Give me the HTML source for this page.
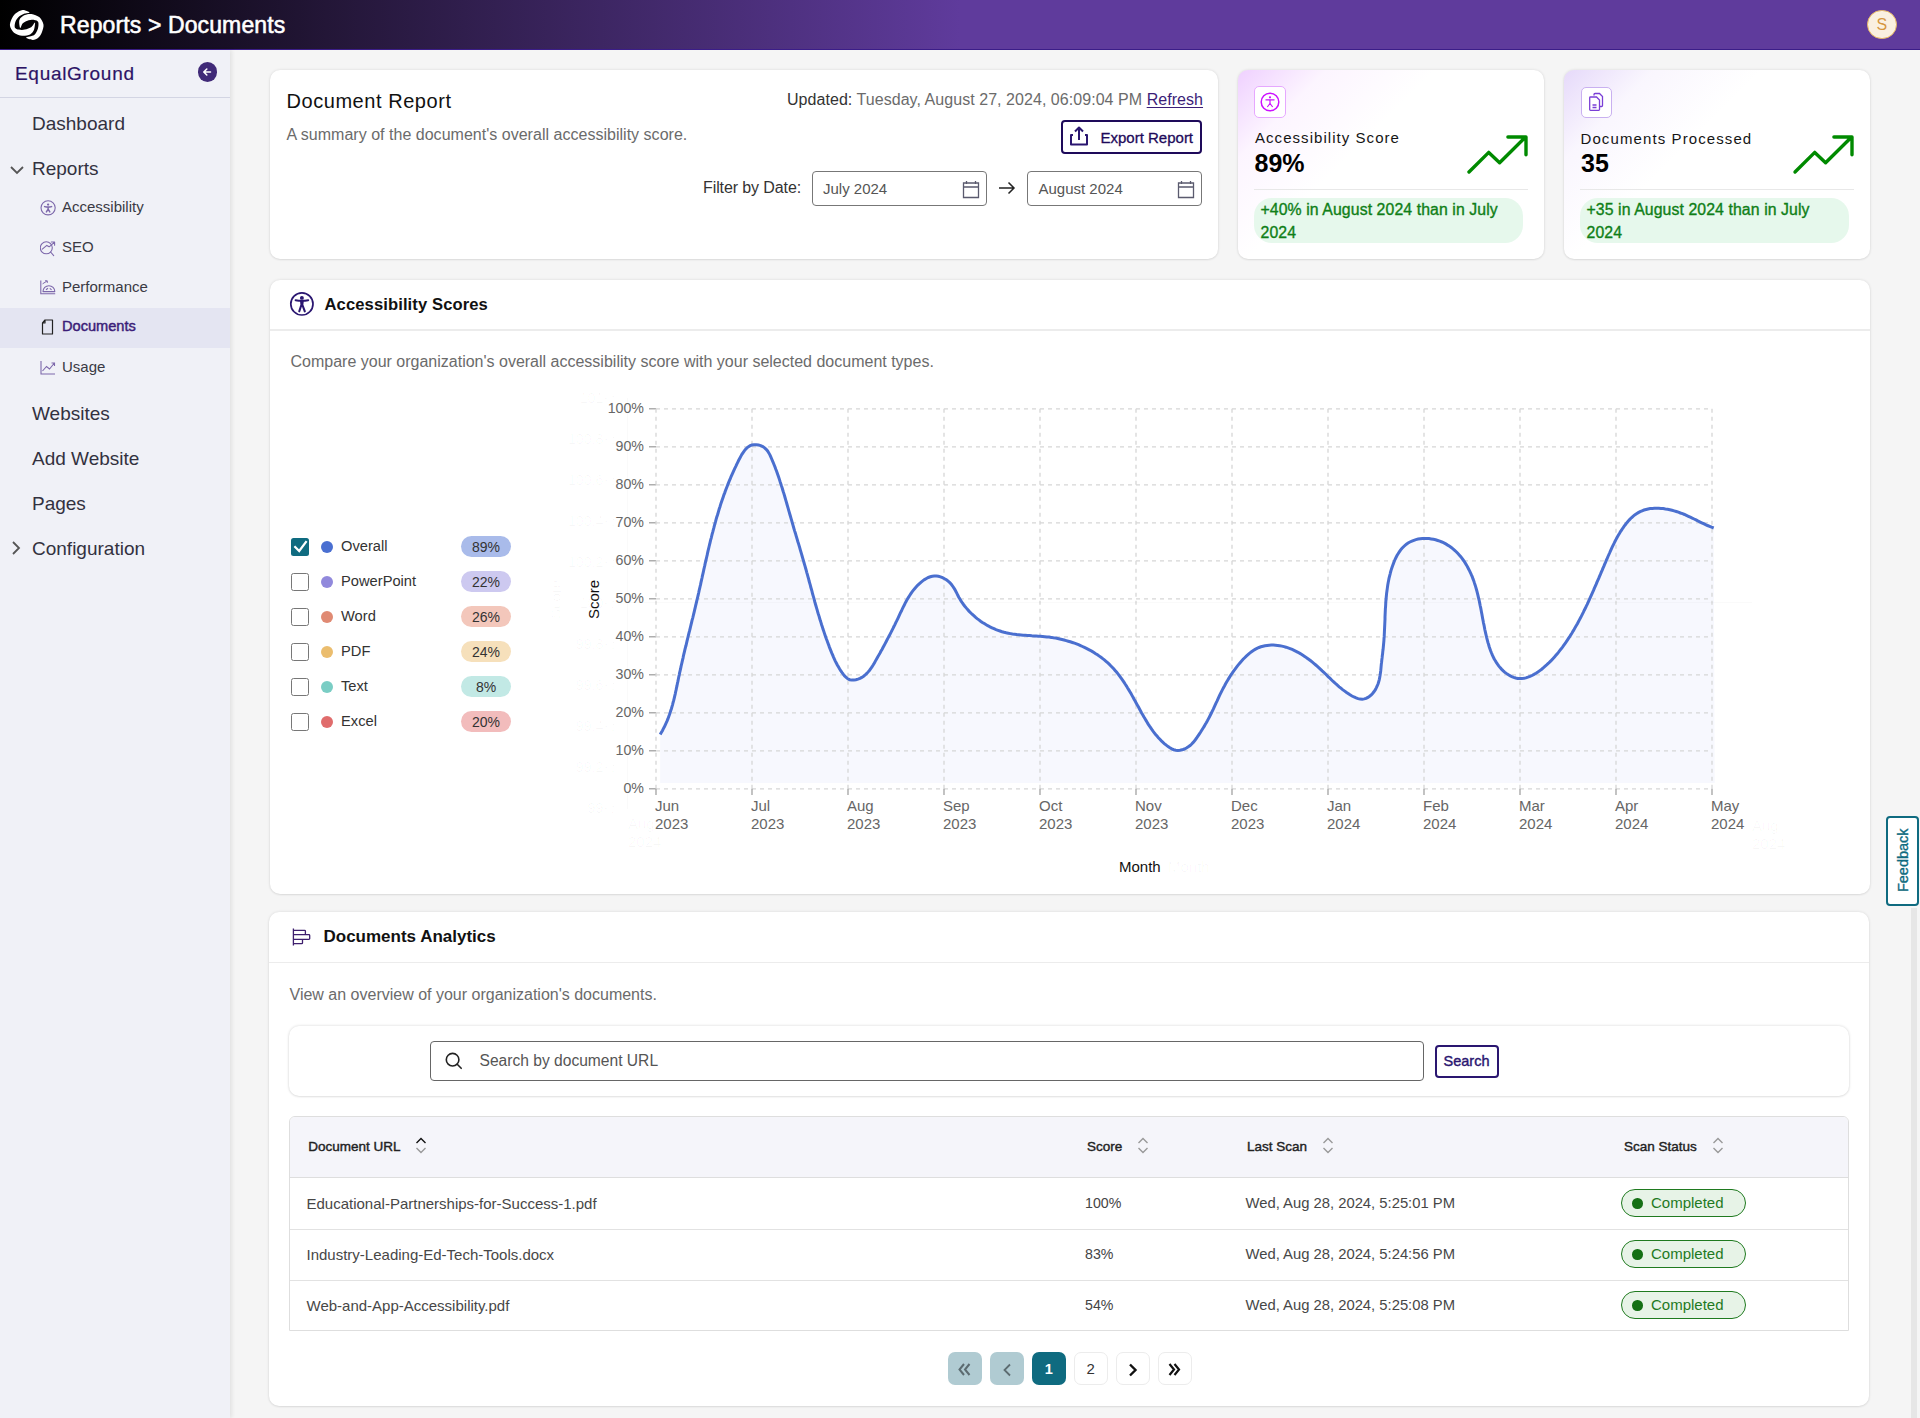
<!DOCTYPE html>
<html><head><meta charset="utf-8">
<style>
*{box-sizing:border-box;margin:0;padding:0}
html,body{width:1920px;height:1418px;overflow:hidden;background:#f5f5f5;font-family:"Liberation Sans",sans-serif;color:#222}
.abs{position:absolute}
.t{position:absolute;white-space:nowrap;line-height:1}
#hdr{position:absolute;left:0;top:0;width:1920px;height:50px;background:linear-gradient(90deg,#000 0%,#231637 17%,#5f3b9c 50%,#5f3b9c 100%);border-bottom:1px solid #3b1d88}
#side{position:absolute;left:0;top:50px;width:230px;height:1368px;background:#f0f1f7;box-shadow:2px 0 4px rgba(0,0,0,.08)}
.card{position:absolute;background:#fff;border-radius:10px;box-shadow:0 0 3px rgba(0,0,0,.12),0 1px 2px rgba(0,0,0,.06)}
.nav1{position:absolute;left:32px;font-size:19px;color:#33313f;white-space:nowrap;line-height:1}
.nav2{position:absolute;left:62px;font-size:15px;color:#3a3a44;white-space:nowrap;line-height:1}
.ico{position:absolute}
</style></head><body>
<!-- HEADER -->
<div id="hdr">
  <svg class="abs" style="left:6px;top:6px" width="44" height="38" viewBox="0 0 44 38"><path d="M23.60,6.40 C23.27,5.88 18.72,3.83 16.60,4.00 C14.49,4.17 11.18,6.09 9.50,7.50 C7.82,8.91 6.23,11.51 5.40,13.40 C4.58,15.29 3.61,18.09 4.00,20.10 C4.39,22.11 6.18,25.35 8.00,26.80 C9.82,28.25 13.69,29.56 16.10,29.80 C18.52,30.04 22.33,29.25 24.10,28.40 C25.87,27.54 27.16,25.87 27.90,24.10 C28.63,22.33 29.36,17.08 29.00,16.60 C28.64,16.12 27.03,19.85 25.50,20.90 C23.97,21.95 20.69,23.20 18.80,23.60 C16.91,24.01 14.40,23.93 12.90,23.60 C11.40,23.27 9.28,22.69 8.80,21.40 C8.32,20.11 9.01,16.68 9.70,15.00 C10.39,13.32 12.04,11.32 13.40,10.20 C14.77,9.07 17.27,8.07 18.80,7.50 C20.33,6.93 23.93,6.93 23.60,6.40Z" fill="#fff"/><path d="M20.10,31.60 C19.89,32.35 24.94,34.02 26.80,34.00 C28.66,33.98 31.14,32.67 32.50,31.50 C33.87,30.33 35.15,28.11 35.90,26.20 C36.65,24.29 37.86,21.04 37.50,18.80 C37.14,16.57 35.30,12.92 33.50,11.30 C31.70,9.68 27.70,8.33 25.50,8.00 C23.30,7.67 20.62,8.21 18.80,9.10 C16.98,9.98 14.09,11.96 13.40,13.90 C12.71,15.84 13.72,21.48 14.20,22.00 C14.68,22.52 15.52,18.49 16.60,17.40 C17.68,16.30 19.66,15.22 21.40,14.70 C23.14,14.17 26.58,13.71 28.20,13.90 C29.82,14.10 31.65,14.66 32.20,16.00 C32.76,17.34 32.50,20.85 31.90,22.80 C31.30,24.75 29.97,27.68 28.20,29.00 C26.43,30.32 20.31,30.85 20.10,31.60Z" fill="#fff"/></svg>
  <div class="t" style="left:60px;top:14px;font-size:23px;color:#fff;-webkit-text-stroke:0.55px #fff;letter-spacing:0.12px">Reports &gt; Documents</div>
  <div class="abs" style="left:1867px;top:9.8px;width:29.5px;height:29.5px;border-radius:50%;background:#faf0e0;border:1.2px solid #e8b860"></div>
  <div class="t" style="left:1867px;width:29.5px;text-align:center;top:16.5px;font-size:16px;color:#d6973e">S</div>
</div>
<!-- SIDEBAR -->
<div id="side">
  <div class="t" style="left:15px;top:13.6px;font-size:19px;color:#2d1466;letter-spacing:0.7px;-webkit-text-stroke:0.2px #2d1466">EqualGround</div>
  <div class="abs" style="left:197.7px;top:12.4px;width:19.6px;height:19.6px;border-radius:50%;background:#402a78"></div>
  <svg class="abs" style="left:201px;top:16px" width="12" height="12" viewBox="0 0 12 12"><path d="M9.5,6 H3 M5.8,3 L2.8,6 L5.8,9" stroke="#fff" stroke-width="1.6" fill="none" stroke-linecap="round" stroke-linejoin="round"/></svg>
  <div class="abs" style="left:0;top:46.5px;width:230px;height:1.2px;background:#d3d5e3"></div>
  <div class="nav1" style="top:63.5px">Dashboard</div>
  <svg class="abs" style="left:9px;top:114px" width="16" height="12" viewBox="0 0 16 12"><path d="M2,3 L8,9 L14,3" stroke="#555" stroke-width="1.8" fill="none"/></svg>
  <div class="nav1" style="top:108.5px">Reports</div>
  <svg class="abs" style="left:40px;top:150px" width="16" height="16" viewBox="0 0 16 16"><circle cx="8.1" cy="7.8" r="7.1" stroke="#7d68ab" stroke-width="1.1" fill="none"/><circle cx="8.1" cy="4.6" r="1.15" fill="#7d68ab"/><path d="M4.6,6.6 Q8.1,7.6 11.6,6.6 M8.1,6.9 V9.2 L6.4,11.9 M8.1,9.2 L9.8,11.9" stroke="#7d68ab" stroke-width="1.5" fill="none" stroke-linecap="round" stroke-linejoin="round"/></svg>
  <div class="nav2" style="top:148.5px">Accessibility</div>
  <svg class="abs" style="left:40px;top:189px" width="17" height="18" viewBox="0 0 17 18"><circle cx="6.3" cy="8.8" r="6" stroke="#7d68ab" stroke-width="1.1" fill="none"/><path d="M10.6,13 L13.7,16.6 M2.3,10.2 L6.8,6.4 L9.2,7.8 L14.3,3.4 M11.3,3 H14.6 V6.2" stroke="#7d68ab" stroke-width="1.1" fill="none" stroke-linecap="round" stroke-linejoin="round"/></svg>
  <div class="nav2" style="top:188.5px">SEO</div>
  <svg class="abs" style="left:40px;top:229px" width="16" height="16" viewBox="0 0 16 16"><path d="M0.8,1.6 V14.8 H15.2" stroke="#7d68ab" stroke-width="1.1" fill="none"/><path d="M3,12.6 A5.9,5.9 0 0 1 14.8,12.6 Z M6,10.8 L8,9.3 M11.6,10.8 L9.8,9.3" stroke="#7d68ab" stroke-width="1.1" fill="none" stroke-linejoin="round"/><path d="M2.6,4.8 L6.8,2.2 M5,1.8 H7.3 V3.9" stroke="#7d68ab" stroke-width="1" fill="none"/></svg>
  <div class="nav2" style="top:228.5px">Performance</div>
  <div class="abs" style="left:0;top:258px;width:230px;height:40px;background:#e4e5f2"></div>
  <svg class="abs" style="left:41px;top:269px" width="13" height="16" viewBox="0 0 13 16"><path d="M4,1 H11.5 V15 H1.5 V4 Z M4,1 V4 H1.5" stroke="#222" stroke-width="1.2" fill="none" stroke-linejoin="round"/></svg>
  <div class="nav2" style="top:269px;color:#3b1d78;-webkit-text-stroke:0.45px #3b1d78;font-size:14.6px">Documents</div>
  <svg class="abs" style="left:40px;top:309px" width="16" height="16" viewBox="0 0 16 16"><path d="M1,2 V15 H15 M2.5,12 L6.5,7.5 L9.5,10 L14,4.5 M11.5,4 H14.5 V7" stroke="#7d68ab" stroke-width="1.1" fill="none"/></svg>
  <div class="nav2" style="top:308.5px">Usage</div>
  <div class="nav1" style="top:353.5px">Websites</div>
  <div class="nav1" style="top:398.5px">Add Website</div>
  <div class="nav1" style="top:443.5px">Pages</div>
  <svg class="abs" style="left:10px;top:490px" width="12" height="16" viewBox="0 0 12 16"><path d="M3,2 L9,8 L3,14" stroke="#555" stroke-width="1.8" fill="none"/></svg>
  <div class="nav1" style="top:488.5px">Configuration</div>
</div>
<!-- CARD 1 -->
<div class="card" style="left:270px;top:70px;width:948px;height:189px">
  <div class="t" style="left:16.5px;top:20.9px;font-size:20px;color:#111;letter-spacing:0.55px">Document Report</div>
  <div class="t" style="left:16.5px;top:57px;font-size:16px;color:#6b6b6b;letter-spacing:0.02px">A summary of the document's overall accessibility score.</div>
  <div class="t" style="left:517px;top:21.5px;font-size:16px;color:#6b6b6b;letter-spacing:0.05px"><span style="color:#333">Updated:</span> Tuesday, August 27, 2024, 06:09:04 PM <span style="color:#3b1d78;text-decoration:underline;text-underline-offset:2px">Refresh</span></div>
  <div class="abs" style="left:791px;top:50px;width:141px;height:34px;border:2px solid #1e0a5a;border-radius:4px"></div>
  <svg class="abs" style="left:799px;top:55px" width="20" height="22" viewBox="0 0 20 22"><path d="M4,10 H2 V19.5 H18 V10 H16 M10,15 V2.5 M6,6.5 L10,2.5 L14,6.5" stroke="#2a1670" stroke-width="2" fill="none" stroke-linejoin="round"/></svg>
  <div class="t" style="left:830.5px;top:59.5px;font-size:15px;color:#1e0a5a;-webkit-text-stroke:0.3px #1e0a5a">Export Report</div>
  <div class="t" style="left:433px;top:109.5px;font-size:16px;color:#333;letter-spacing:-0.1px">Filter by Date:</div>
  <div class="abs" style="left:542px;top:101px;width:175px;height:35px;border:1.5px solid #777;border-radius:4px"></div>
  <div class="t" style="left:553px;top:111px;font-size:15px;color:#555">July 2024</div>
  <svg class="abs" style="left:692px;top:110px" width="18" height="19" viewBox="0 0 18 19"><path d="M1.5,3 H16.5 V17.5 H1.5 Z M1.5,7 H16.5 M4.5,1 V4 M13.5,1 V4" stroke="#5a5a6e" stroke-width="1.3" fill="none"/></svg>
  <svg class="abs" style="left:728px;top:111px" width="18" height="14" viewBox="0 0 18 14"><path d="M1,7 H16 M10.5,1.5 L16,7 L10.5,12.5" stroke="#222" stroke-width="1.5" fill="none"/></svg>
  <div class="abs" style="left:757px;top:101px;width:175px;height:35px;border:1.5px solid #777;border-radius:4px"></div>
  <div class="t" style="left:768.5px;top:111px;font-size:15px;color:#555">August 2024</div>
  <svg class="abs" style="left:907px;top:110px" width="18" height="19" viewBox="0 0 18 19"><path d="M1.5,3 H16.5 V17.5 H1.5 Z M1.5,7 H16.5 M4.5,1 V4 M13.5,1 V4" stroke="#5a5a6e" stroke-width="1.3" fill="none"/></svg>
</div>
<!-- CARD 2 -->
<div class="card" style="left:1238px;top:70px;width:306px;height:189px;overflow:hidden">
  <div class="abs" style="left:0;top:0;width:306px;height:189px;background:linear-gradient(135deg,rgba(226,170,255,.55) 0%,rgba(245,215,255,.25) 18%,rgba(255,255,255,0) 40%)"></div>
  <div class="abs" style="left:16px;top:16px;width:32px;height:32px;border:1.5px solid #e6a8ff;border-radius:5px;background:#fff"></div>
  <svg class="abs" style="left:22px;top:22px" width="20" height="20" viewBox="0 0 20 20"><circle cx="10" cy="10" r="8.8" stroke="#cc11ff" stroke-width="1.5" fill="none"/><circle cx="10" cy="5.3" r="1.1" fill="#cc11ff"/><path d="M5.5,7.8 H14.5 M10,7.8 V11.5 M10,11.5 L7.3,15 M10,11.5 L12.7,15" stroke="#cc11ff" stroke-width="1.2" fill="none"/></svg>
  <div class="t" style="left:17px;top:60px;font-size:15px;color:#151515;letter-spacing:1.05px">Accessibility Score</div>
  <div class="t" style="left:16.5px;top:151px;display:none"></div>
  <div class="t" style="left:16.5px;top:81px;font-size:25px;font-weight:bold;color:#000">89%</div>
  <svg class="abs" style="left:222px;top:58px" width="76" height="52" viewBox="1460 128 76 52"><path d="M1469,172 L1488.75,152.4 L1499.6,162.8 L1525.6,137 M1507.9,137 H1526 V154.7" stroke="#008a00" stroke-width="3.4" fill="none" stroke-linecap="round" stroke-linejoin="round"/></svg>
  <div class="abs" style="left:16px;top:118.5px;width:274px;height:1px;background:#e8e8e8"></div>
  <div class="abs" style="left:16px;top:128px;width:269px;height:44.5px;border-radius:18px;background:#e6f8ec"></div>
  <div class="t" style="left:22.5px;top:127.5px;font-size:15.8px;letter-spacing:0.1px;color:#0f7f17;-webkit-text-stroke:0.35px #0f7f17;line-height:23px">+40% in August 2024 than in July<br>2024</div>
</div>
<!-- CARD 3 -->
<div class="card" style="left:1564px;top:70px;width:306px;height:189px;overflow:hidden">
  <div class="abs" style="left:0;top:0;width:306px;height:189px;background:linear-gradient(135deg,rgba(205,180,245,.5) 0%,rgba(230,215,250,.22) 18%,rgba(255,255,255,0) 40%)"></div>
  <div class="abs" style="left:16.5px;top:16.5px;width:31.5px;height:31.5px;border:1.5px solid #c9b0f0;border-radius:5px;background:#fff"></div>
  <svg class="abs" style="left:22px;top:22px" width="20" height="20" viewBox="0 0 20 20"><path d="M8,3.5 V2.5 A1,1 0 0 1 9,1.5 H13.5 L16.5,4.5 V13.5 A1,1 0 0 1 15.5,14.5 H14" stroke="#7a3fd6" stroke-width="1.3" fill="none"/><path d="M4.5,5 H10.5 L13.5,8 V17.5 A0.8,0.8 0 0 1 12.7,18.3 H4.5 A0.8,0.8 0 0 1 3.7,17.5 V5.8 A0.8,0.8 0 0 1 4.5,5 Z M6.5,13 H10.5 M6.5,15.5 H10.5" stroke="#7a3fd6" stroke-width="1.3" fill="none"/></svg>
  <div class="t" style="left:16.5px;top:60.5px;font-size:15px;color:#151515;letter-spacing:1.1px">Documents Processed</div>
  <div class="t" style="left:17px;top:81px;font-size:25px;font-weight:bold;color:#000">35</div>
  <svg class="abs" style="left:222px;top:58px" width="76" height="52" viewBox="1460 128 76 52"><path d="M1469,172 L1488.75,152.4 L1499.6,162.8 L1525.6,137 M1507.9,137 H1526 V154.7" stroke="#008a00" stroke-width="3.4" fill="none" stroke-linecap="round" stroke-linejoin="round"/></svg>
  <div class="abs" style="left:16px;top:119px;width:274px;height:1px;background:#e8e8e8"></div>
  <div class="abs" style="left:16px;top:128px;width:269px;height:44.5px;border-radius:18px;background:#e6f8ec"></div>
  <div class="t" style="left:22.5px;top:127.5px;font-size:15.8px;letter-spacing:0.1px;color:#0f7f17;-webkit-text-stroke:0.35px #0f7f17;line-height:23px">+35 in August 2024 than in July<br>2024</div>
</div>
<!-- CARD 4 -->
<div class="card" style="left:270px;top:280px;width:1600px;height:614px">
  <svg class="abs" style="left:19px;top:11px" width="26" height="26" viewBox="0 0 26 26"><circle cx="12.9" cy="12.9" r="11.1" stroke="#2a1670" stroke-width="1.7" fill="none"/><circle cx="12.9" cy="6.9" r="1.95" fill="#2a1670"/><path d="M6.6,9.2 Q12.9,10.4 19.2,9.2" stroke="#2a1670" stroke-width="2" fill="none" stroke-linecap="round"/><path d="M11,9.7 L14.8,9.7 L14.2,15.4 L11.6,15.4 Z" fill="#2a1670"/><path d="M12,15 L10.3,20.3 M13.8,15 L15.8,20.3" stroke="#2a1670" stroke-width="2.1" fill="none" stroke-linecap="round"/></svg>
  <div class="t" style="left:54.5px;top:16.5px;font-size:16.6px;font-weight:bold;color:#111;letter-spacing:0.1px">Accessibility Scores</div>
  <div class="abs" style="left:0;top:49px;width:1600px;height:1.5px;background:#ececec"></div>
  <div class="t" style="left:20.5px;top:74px;font-size:16px;color:#6b6b6b">Compare your organization's overall accessibility score with your selected document types.</div>
</div>
<svg class="abs" style="left:0;top:0" width="1920" height="1418" viewBox="0 0 1920 1418">
<path d="M660.2,734.5 L661.3,732.6 L662.4,730.7 L663.4,728.7 L664.4,726.8 L665.3,724.8 L666.2,722.9 L667.1,720.9 L667.9,718.9 L668.6,716.9 L669.4,714.8 L670.1,712.8 L670.7,710.7 L671.4,708.7 L672.0,706.6 L672.6,704.6 L673.1,702.5 L673.7,700.4 L674.2,698.3 L674.7,696.2 L675.2,694.1 L675.6,692.0 L676.1,689.9 L676.5,687.8 L677.0,685.7 L677.4,683.5 L677.9,681.4 L678.3,679.3 L678.7,677.2 L679.2,675.1 L679.6,672.9 L680.1,670.8 L680.6,668.7 L681.0,666.6 L681.5,664.5 L682.0,662.4 L682.5,660.2 L683.0,658.1 L683.4,656.0 L683.9,653.9 L684.4,651.8 L684.9,649.7 L685.4,647.6 L686.0,645.5 L686.5,643.4 L687.0,641.2 L687.5,639.1 L688.0,637.0 L688.5,634.9 L689.0,632.8 L689.6,630.7 L690.1,628.6 L690.6,626.5 L691.1,624.4 L691.6,622.3 L692.1,620.2 L692.7,618.1 L693.2,616.0 L693.7,613.9 L694.2,611.8 L694.7,609.7 L695.2,607.6 L695.7,605.4 L696.2,603.3 L696.7,601.2 L697.2,599.1 L697.7,597.0 L698.2,594.9 L698.7,592.8 L699.1,590.7 L699.6,588.6 L700.1,586.5 L700.6,584.4 L701.0,582.3 L701.5,580.2 L702.0,578.0 L702.4,575.9 L702.9,573.8 L703.4,571.7 L703.8,569.6 L704.3,567.5 L704.8,565.4 L705.2,563.3 L705.7,561.2 L706.2,559.1 L706.7,557.0 L707.2,554.9 L707.6,552.8 L708.1,550.7 L708.6,548.6 L709.1,546.5 L709.6,544.4 L710.1,542.3 L710.6,540.2 L711.2,538.1 L711.7,536.0 L712.2,533.9 L712.8,531.9 L713.3,529.8 L713.9,527.7 L714.4,525.6 L715.0,523.5 L715.6,521.4 L716.1,519.4 L716.7,517.3 L717.4,515.2 L718.0,513.2 L718.6,511.1 L719.2,509.0 L719.9,507.0 L720.5,504.9 L721.2,502.8 L721.9,500.8 L722.6,498.7 L723.3,496.7 L724.0,494.6 L724.8,492.6 L725.5,490.6 L726.3,488.5 L727.1,486.5 L727.9,484.4 L728.7,482.4 L729.5,480.4 L730.4,478.4 L731.2,476.3 L732.1,474.3 L733.0,472.3 L733.9,470.3 L734.8,468.3 L735.8,466.3 L736.7,464.3 L737.7,462.3 L738.7,460.3 L739.8,458.3 L740.8,456.4 L741.9,454.4 L743.1,452.6 L744.3,450.9 L745.6,449.3 L747.0,447.9 L748.5,446.7 L750.2,445.7 L752.0,445.0 L754.0,444.7 L756.2,444.7 L758.5,445.0 L760.7,445.6 L762.8,446.5 L764.6,447.8 L766.2,449.3 L767.6,451.0 L768.8,452.9 L769.9,454.9 L770.8,456.9 L771.7,459.0 L772.6,461.1 L773.5,463.2 L774.3,465.2 L775.1,467.3 L775.8,469.3 L776.6,471.3 L777.3,473.3 L778.0,475.3 L778.7,477.3 L779.4,479.4 L780.0,481.4 L780.7,483.4 L781.3,485.4 L782.0,487.4 L782.6,489.5 L783.2,491.5 L783.9,493.6 L784.5,495.7 L785.1,497.7 L785.7,499.8 L786.3,501.9 L786.9,504.0 L787.5,506.1 L788.1,508.2 L788.7,510.3 L789.3,512.4 L789.9,514.5 L790.5,516.5 L791.1,518.6 L791.7,520.7 L792.3,522.8 L792.9,524.9 L793.5,527.0 L794.1,529.1 L794.7,531.1 L795.4,533.2 L796.0,535.3 L796.6,537.4 L797.2,539.4 L797.8,541.5 L798.5,543.6 L799.1,545.6 L799.7,547.7 L800.3,549.8 L800.9,551.9 L801.5,553.9 L802.1,556.0 L802.7,558.1 L803.3,560.2 L803.9,562.2 L804.5,564.3 L805.1,566.4 L805.7,568.5 L806.3,570.6 L806.8,572.6 L807.4,574.7 L808.0,576.8 L808.6,578.9 L809.1,581.0 L809.7,583.1 L810.3,585.2 L810.8,587.3 L811.4,589.3 L812.0,591.4 L812.5,593.5 L813.1,595.6 L813.7,597.7 L814.3,599.8 L814.8,601.9 L815.4,604.0 L816.0,606.0 L816.6,608.1 L817.2,610.2 L817.8,612.3 L818.4,614.3 L819.1,616.4 L819.7,618.5 L820.3,620.6 L821.0,622.6 L821.6,624.7 L822.3,626.7 L822.9,628.8 L823.6,630.8 L824.3,632.9 L825.0,634.9 L825.7,637.0 L826.4,639.0 L827.2,641.0 L827.9,643.1 L828.7,645.1 L829.4,647.1 L830.2,649.1 L831.0,651.1 L831.8,653.1 L832.7,655.1 L833.5,657.1 L834.4,659.1 L835.3,661.1 L836.3,663.0 L837.3,664.9 L838.4,666.8 L839.5,668.7 L840.7,670.6 L841.9,672.4 L843.2,674.2 L844.6,675.9 L846.2,677.5 L847.8,678.8 L849.7,679.7 L851.7,680.1 L853.8,680.1 L855.9,679.8 L858.0,679.2 L860.0,678.4 L861.8,677.4 L863.6,676.2 L865.2,674.9 L866.8,673.5 L868.2,671.9 L869.6,670.2 L870.9,668.5 L872.1,666.7 L873.3,664.8 L874.4,662.9 L875.5,660.9 L876.6,659.0 L877.7,657.1 L878.8,655.1 L879.9,653.2 L880.9,651.3 L882.0,649.4 L883.0,647.5 L884.1,645.6 L885.1,643.6 L886.1,641.7 L887.1,639.8 L888.1,637.9 L889.1,636.0 L890.1,634.1 L891.1,632.2 L892.0,630.3 L893.0,628.4 L893.9,626.5 L894.9,624.6 L895.8,622.6 L896.8,620.7 L897.7,618.8 L898.6,616.8 L899.5,614.9 L900.4,612.9 L901.4,611.0 L902.3,609.0 L903.2,607.1 L904.2,605.2 L905.2,603.2 L906.2,601.3 L907.2,599.4 L908.3,597.6 L909.5,595.7 L910.7,593.9 L911.9,592.1 L913.2,590.4 L914.6,588.7 L916.1,587.0 L917.6,585.3 L919.2,583.8 L920.9,582.3 L922.7,580.9 L924.5,579.6 L926.4,578.5 L928.3,577.5 L930.3,576.8 L932.3,576.2 L934.3,576.0 L936.4,576.0 L938.4,576.3 L940.5,576.9 L942.5,577.7 L944.5,578.7 L946.4,579.8 L948.1,581.2 L949.8,582.7 L951.3,584.3 L952.6,586.0 L953.8,587.8 L954.9,589.6 L955.9,591.5 L956.9,593.4 L957.8,595.3 L958.8,597.2 L959.9,599.1 L961.0,600.9 L962.2,602.7 L963.5,604.5 L964.8,606.2 L966.2,607.9 L967.6,609.5 L969.0,611.1 L970.6,612.7 L972.1,614.2 L973.8,615.7 L975.4,617.2 L977.1,618.6 L978.9,619.9 L980.6,621.2 L982.4,622.4 L984.3,623.6 L986.2,624.8 L988.1,625.8 L990.0,626.9 L992.0,627.8 L994.0,628.7 L996.0,629.6 L998.0,630.3 L1000.0,631.0 L1002.1,631.7 L1004.1,632.3 L1006.2,632.8 L1008.3,633.2 L1010.4,633.6 L1012.5,634.0 L1014.6,634.3 L1016.7,634.6 L1018.9,634.8 L1021.0,635.0 L1023.2,635.2 L1025.3,635.3 L1027.5,635.5 L1029.6,635.6 L1031.8,635.8 L1034.0,635.9 L1036.1,636.0 L1038.3,636.2 L1040.4,636.3 L1042.6,636.5 L1044.8,636.7 L1046.9,636.9 L1049.1,637.1 L1051.3,637.4 L1053.4,637.8 L1055.6,638.1 L1057.7,638.5 L1059.8,639.0 L1062.0,639.5 L1064.1,640.0 L1066.2,640.6 L1068.3,641.2 L1070.3,641.8 L1072.4,642.5 L1074.5,643.2 L1076.5,643.9 L1078.5,644.7 L1080.5,645.6 L1082.5,646.5 L1084.4,647.4 L1086.4,648.3 L1088.3,649.3 L1090.2,650.3 L1092.1,651.4 L1093.9,652.5 L1095.7,653.7 L1097.5,654.8 L1099.3,656.1 L1101.0,657.3 L1102.7,658.6 L1104.4,659.9 L1106.0,661.3 L1107.6,662.7 L1109.2,664.2 L1110.7,665.7 L1112.2,667.2 L1113.7,668.8 L1115.1,670.4 L1116.5,672.0 L1117.8,673.7 L1119.1,675.4 L1120.4,677.1 L1121.7,678.9 L1122.9,680.6 L1124.1,682.4 L1125.3,684.3 L1126.5,686.1 L1127.6,688.0 L1128.8,689.9 L1129.9,691.7 L1131.0,693.6 L1132.1,695.6 L1133.2,697.5 L1134.2,699.4 L1135.3,701.3 L1136.3,703.3 L1137.4,705.2 L1138.5,707.1 L1139.5,709.0 L1140.6,711.0 L1141.6,712.9 L1142.7,714.8 L1143.8,716.7 L1144.9,718.5 L1146.0,720.4 L1147.1,722.2 L1148.2,724.1 L1149.4,725.9 L1150.6,727.6 L1151.8,729.4 L1153.0,731.1 L1154.3,732.8 L1155.6,734.5 L1157.0,736.1 L1158.4,737.7 L1159.9,739.3 L1161.4,740.9 L1163.0,742.4 L1164.6,743.8 L1166.3,745.2 L1168.1,746.6 L1169.9,747.8 L1171.8,748.9 L1173.7,749.7 L1175.8,750.2 L1177.9,750.4 L1180.0,750.3 L1182.2,749.8 L1184.4,749.0 L1186.4,748.0 L1188.3,746.8 L1190.1,745.5 L1191.7,744.0 L1193.2,742.4 L1194.6,740.7 L1195.9,739.0 L1197.2,737.2 L1198.4,735.4 L1199.6,733.6 L1200.8,731.8 L1201.9,730.0 L1203.0,728.2 L1204.2,726.4 L1205.2,724.5 L1206.3,722.7 L1207.4,720.8 L1208.4,718.9 L1209.4,717.0 L1210.4,715.0 L1211.4,713.0 L1212.3,711.1 L1213.3,709.1 L1214.2,707.1 L1215.1,705.1 L1216.0,703.1 L1217.0,701.1 L1217.9,699.1 L1218.8,697.1 L1219.7,695.2 L1220.7,693.2 L1221.6,691.3 L1222.6,689.4 L1223.6,687.5 L1224.6,685.7 L1225.6,683.8 L1226.6,682.0 L1227.7,680.2 L1228.8,678.4 L1229.9,676.6 L1231.0,674.8 L1232.2,673.1 L1233.4,671.3 L1234.7,669.6 L1236.0,667.8 L1237.3,666.1 L1238.7,664.4 L1240.1,662.7 L1241.6,661.0 L1243.1,659.3 L1244.7,657.7 L1246.3,656.1 L1248.0,654.6 L1249.7,653.1 L1251.5,651.8 L1253.3,650.5 L1255.1,649.4 L1257.0,648.4 L1259.0,647.5 L1260.9,646.8 L1263.0,646.2 L1265.0,645.7 L1267.1,645.4 L1269.2,645.2 L1271.3,645.1 L1273.4,645.1 L1275.5,645.2 L1277.6,645.4 L1279.7,645.7 L1281.9,646.1 L1284.0,646.6 L1286.0,647.2 L1288.1,647.9 L1290.1,648.6 L1292.2,649.4 L1294.1,650.3 L1296.1,651.3 L1298.0,652.3 L1299.9,653.4 L1301.8,654.5 L1303.6,655.7 L1305.4,656.9 L1307.2,658.2 L1309.0,659.5 L1310.7,660.8 L1312.4,662.2 L1314.1,663.6 L1315.8,665.0 L1317.4,666.4 L1319.0,667.9 L1320.6,669.4 L1322.2,670.9 L1323.8,672.3 L1325.3,673.8 L1326.8,675.3 L1328.3,676.8 L1329.9,678.2 L1331.4,679.7 L1332.9,681.2 L1334.5,682.6 L1336.0,684.0 L1337.6,685.4 L1339.2,686.8 L1340.9,688.2 L1342.6,689.6 L1344.4,690.9 L1346.2,692.2 L1348.1,693.5 L1350.0,694.8 L1352.0,696.0 L1354.0,697.0 L1356.1,697.9 L1358.1,698.6 L1360.2,699.1 L1362.2,699.2 L1364.2,698.9 L1366.1,698.4 L1367.9,697.4 L1369.6,696.2 L1371.3,694.8 L1372.8,693.2 L1374.1,691.5 L1375.4,689.6 L1376.4,687.7 L1377.3,685.7 L1378.1,683.7 L1378.7,681.7 L1379.3,679.6 L1379.7,677.5 L1380.1,675.3 L1380.4,673.1 L1380.7,671.0 L1380.9,668.8 L1381.1,666.6 L1381.3,664.4 L1381.6,662.2 L1381.8,660.0 L1382.1,657.9 L1382.3,655.7 L1382.6,653.6 L1382.8,651.4 L1383.1,649.3 L1383.3,647.1 L1383.5,645.0 L1383.7,642.9 L1383.9,640.7 L1384.0,638.6 L1384.2,636.4 L1384.3,634.3 L1384.4,632.1 L1384.5,629.9 L1384.6,627.8 L1384.7,625.6 L1384.8,623.5 L1384.9,621.3 L1385.0,619.2 L1385.0,617.0 L1385.1,614.9 L1385.2,612.7 L1385.3,610.5 L1385.4,608.4 L1385.6,606.2 L1385.7,604.1 L1385.8,601.9 L1386.0,599.8 L1386.2,597.6 L1386.4,595.5 L1386.6,593.3 L1386.9,591.2 L1387.2,589.1 L1387.5,586.9 L1387.8,584.8 L1388.2,582.6 L1388.6,580.5 L1389.0,578.4 L1389.5,576.3 L1390.1,574.1 L1390.6,572.0 L1391.2,569.9 L1391.9,567.8 L1392.6,565.7 L1393.4,563.6 L1394.2,561.5 L1395.0,559.5 L1396.0,557.5 L1397.0,555.5 L1398.1,553.7 L1399.3,551.9 L1400.5,550.1 L1401.8,548.5 L1403.3,547.0 L1404.8,545.5 L1406.4,544.2 L1408.1,543.0 L1409.9,542.0 L1411.9,541.1 L1413.9,540.3 L1415.9,539.6 L1418.1,539.1 L1420.2,538.8 L1422.4,538.5 L1424.6,538.4 L1426.8,538.5 L1429.0,538.6 L1431.2,538.9 L1433.4,539.3 L1435.6,539.8 L1437.7,540.5 L1439.8,541.2 L1441.9,542.0 L1443.9,542.9 L1445.8,543.9 L1447.7,545.1 L1449.6,546.2 L1451.3,547.5 L1453.0,548.8 L1454.7,550.3 L1456.2,551.7 L1457.7,553.3 L1459.2,554.9 L1460.6,556.5 L1461.9,558.2 L1463.2,560.0 L1464.4,561.7 L1465.6,563.6 L1466.7,565.4 L1467.7,567.3 L1468.7,569.2 L1469.7,571.1 L1470.6,573.0 L1471.4,574.9 L1472.3,576.9 L1473.0,578.9 L1473.8,580.9 L1474.4,582.9 L1475.1,584.9 L1475.7,586.9 L1476.3,589.0 L1476.9,591.1 L1477.4,593.1 L1477.9,595.2 L1478.4,597.3 L1478.9,599.4 L1479.4,601.5 L1479.8,603.6 L1480.2,605.8 L1480.7,607.9 L1481.1,610.0 L1481.5,612.2 L1481.9,614.3 L1482.3,616.5 L1482.7,618.7 L1483.1,620.8 L1483.5,623.0 L1484.0,625.1 L1484.4,627.3 L1484.8,629.5 L1485.3,631.6 L1485.8,633.8 L1486.3,636.0 L1486.8,638.1 L1487.4,640.3 L1487.9,642.4 L1488.6,644.5 L1489.2,646.7 L1489.9,648.7 L1490.6,650.8 L1491.4,652.8 L1492.3,654.9 L1493.2,656.8 L1494.1,658.7 L1495.2,660.6 L1496.3,662.4 L1497.5,664.2 L1498.7,665.9 L1500.1,667.6 L1501.5,669.1 L1503.0,670.6 L1504.6,672.1 L1506.3,673.4 L1508.1,674.6 L1509.9,675.7 L1511.8,676.6 L1513.7,677.4 L1515.7,678.0 L1517.7,678.4 L1519.7,678.6 L1521.8,678.6 L1523.8,678.3 L1525.9,677.9 L1527.9,677.2 L1530.0,676.4 L1532.0,675.5 L1534.0,674.4 L1536.0,673.2 L1537.9,672.0 L1539.8,670.6 L1541.7,669.2 L1543.5,667.7 L1545.2,666.2 L1546.9,664.7 L1548.5,663.2 L1550.1,661.6 L1551.6,660.1 L1553.1,658.5 L1554.5,656.9 L1555.9,655.3 L1557.3,653.7 L1558.6,652.1 L1559.9,650.4 L1561.2,648.8 L1562.5,647.1 L1563.7,645.4 L1565.0,643.6 L1566.2,641.9 L1567.4,640.1 L1568.5,638.4 L1569.7,636.6 L1570.8,634.8 L1572.0,633.0 L1573.1,631.1 L1574.2,629.3 L1575.2,627.4 L1576.3,625.6 L1577.4,623.7 L1578.4,621.8 L1579.4,619.9 L1580.4,618.0 L1581.4,616.1 L1582.4,614.1 L1583.4,612.2 L1584.3,610.2 L1585.3,608.3 L1586.2,606.3 L1587.2,604.4 L1588.1,602.4 L1589.0,600.4 L1589.9,598.4 L1590.8,596.4 L1591.7,594.4 L1592.6,592.4 L1593.5,590.4 L1594.3,588.4 L1595.2,586.4 L1596.1,584.4 L1596.9,582.4 L1597.8,580.4 L1598.7,578.4 L1599.5,576.4 L1600.4,574.4 L1601.2,572.4 L1602.1,570.4 L1602.9,568.4 L1603.8,566.4 L1604.6,564.4 L1605.5,562.4 L1606.3,560.4 L1607.2,558.4 L1608.0,556.5 L1608.9,554.5 L1609.8,552.5 L1610.6,550.6 L1611.5,548.6 L1612.4,546.7 L1613.3,544.8 L1614.3,542.9 L1615.2,541.0 L1616.2,539.1 L1617.2,537.2 L1618.3,535.3 L1619.4,533.5 L1620.5,531.6 L1621.7,529.8 L1622.9,528.0 L1624.2,526.2 L1625.5,524.5 L1626.9,522.7 L1628.3,521.0 L1629.8,519.4 L1631.4,517.8 L1633.0,516.3 L1634.7,514.9 L1636.5,513.7 L1638.3,512.6 L1640.1,511.6 L1642.1,510.8 L1644.0,510.0 L1646.1,509.5 L1648.1,509.0 L1650.2,508.6 L1652.3,508.4 L1654.5,508.3 L1656.7,508.2 L1658.8,508.3 L1661.0,508.4 L1663.2,508.6 L1665.4,509.0 L1667.6,509.3 L1669.8,509.8 L1672.0,510.3 L1674.1,510.9 L1676.3,511.5 L1678.4,512.2 L1680.4,513.0 L1682.5,513.7 L1684.5,514.5 L1686.4,515.4 L1688.4,516.3 L1690.3,517.2 L1692.2,518.1 L1694.1,519.0 L1696.0,519.9 L1697.8,520.9 L1699.7,521.8 L1701.7,522.8 L1703.6,523.7 L1705.5,524.6 L1707.5,525.5 L1709.6,526.3 L1711.6,527.2 L1713.7,528.0 L1714.7,783 L660.2,783 Z" fill="#f7f8fe"/>
<line x1="656" y1="788.8" x2="1712" y2="788.8" stroke="#d6d6d6" stroke-width="1.3" stroke-dasharray="4 4"/>
<line x1="649" y1="788.8" x2="656" y2="788.8" stroke="#9a9a9a" stroke-width="1.2"/>
<line x1="656" y1="750.8" x2="1712" y2="750.8" stroke="#d6d6d6" stroke-width="1.3" stroke-dasharray="4 4"/>
<line x1="649" y1="750.8" x2="656" y2="750.8" stroke="#9a9a9a" stroke-width="1.2"/>
<line x1="656" y1="712.8" x2="1712" y2="712.8" stroke="#d6d6d6" stroke-width="1.3" stroke-dasharray="4 4"/>
<line x1="649" y1="712.8" x2="656" y2="712.8" stroke="#9a9a9a" stroke-width="1.2"/>
<line x1="656" y1="674.8" x2="1712" y2="674.8" stroke="#d6d6d6" stroke-width="1.3" stroke-dasharray="4 4"/>
<line x1="649" y1="674.8" x2="656" y2="674.8" stroke="#9a9a9a" stroke-width="1.2"/>
<line x1="656" y1="636.8" x2="1712" y2="636.8" stroke="#d6d6d6" stroke-width="1.3" stroke-dasharray="4 4"/>
<line x1="649" y1="636.8" x2="656" y2="636.8" stroke="#9a9a9a" stroke-width="1.2"/>
<line x1="656" y1="598.8" x2="1712" y2="598.8" stroke="#d6d6d6" stroke-width="1.3" stroke-dasharray="4 4"/>
<line x1="649" y1="598.8" x2="656" y2="598.8" stroke="#9a9a9a" stroke-width="1.2"/>
<line x1="656" y1="560.8" x2="1712" y2="560.8" stroke="#d6d6d6" stroke-width="1.3" stroke-dasharray="4 4"/>
<line x1="649" y1="560.8" x2="656" y2="560.8" stroke="#9a9a9a" stroke-width="1.2"/>
<line x1="656" y1="522.8" x2="1712" y2="522.8" stroke="#d6d6d6" stroke-width="1.3" stroke-dasharray="4 4"/>
<line x1="649" y1="522.8" x2="656" y2="522.8" stroke="#9a9a9a" stroke-width="1.2"/>
<line x1="656" y1="484.8" x2="1712" y2="484.8" stroke="#d6d6d6" stroke-width="1.3" stroke-dasharray="4 4"/>
<line x1="649" y1="484.8" x2="656" y2="484.8" stroke="#9a9a9a" stroke-width="1.2"/>
<line x1="656" y1="446.8" x2="1712" y2="446.8" stroke="#d6d6d6" stroke-width="1.3" stroke-dasharray="4 4"/>
<line x1="649" y1="446.8" x2="656" y2="446.8" stroke="#9a9a9a" stroke-width="1.2"/>
<line x1="656" y1="408.8" x2="1712" y2="408.8" stroke="#d6d6d6" stroke-width="1.3" stroke-dasharray="4 4"/>
<line x1="649" y1="408.8" x2="656" y2="408.8" stroke="#9a9a9a" stroke-width="1.2"/>
<line x1="656.0" y1="408.8" x2="656.0" y2="788.8" stroke="#d6d6d6" stroke-width="1.3" stroke-dasharray="4 4"/>
<line x1="656.0" y1="788.8" x2="656.0" y2="795" stroke="#9a9a9a" stroke-width="1.2"/>
<line x1="752.0" y1="408.8" x2="752.0" y2="788.8" stroke="#d6d6d6" stroke-width="1.3" stroke-dasharray="4 4"/>
<line x1="752.0" y1="788.8" x2="752.0" y2="795" stroke="#9a9a9a" stroke-width="1.2"/>
<line x1="848.0" y1="408.8" x2="848.0" y2="788.8" stroke="#d6d6d6" stroke-width="1.3" stroke-dasharray="4 4"/>
<line x1="848.0" y1="788.8" x2="848.0" y2="795" stroke="#9a9a9a" stroke-width="1.2"/>
<line x1="944.0" y1="408.8" x2="944.0" y2="788.8" stroke="#d6d6d6" stroke-width="1.3" stroke-dasharray="4 4"/>
<line x1="944.0" y1="788.8" x2="944.0" y2="795" stroke="#9a9a9a" stroke-width="1.2"/>
<line x1="1040.0" y1="408.8" x2="1040.0" y2="788.8" stroke="#d6d6d6" stroke-width="1.3" stroke-dasharray="4 4"/>
<line x1="1040.0" y1="788.8" x2="1040.0" y2="795" stroke="#9a9a9a" stroke-width="1.2"/>
<line x1="1136.0" y1="408.8" x2="1136.0" y2="788.8" stroke="#d6d6d6" stroke-width="1.3" stroke-dasharray="4 4"/>
<line x1="1136.0" y1="788.8" x2="1136.0" y2="795" stroke="#9a9a9a" stroke-width="1.2"/>
<line x1="1232.0" y1="408.8" x2="1232.0" y2="788.8" stroke="#d6d6d6" stroke-width="1.3" stroke-dasharray="4 4"/>
<line x1="1232.0" y1="788.8" x2="1232.0" y2="795" stroke="#9a9a9a" stroke-width="1.2"/>
<line x1="1328.0" y1="408.8" x2="1328.0" y2="788.8" stroke="#d6d6d6" stroke-width="1.3" stroke-dasharray="4 4"/>
<line x1="1328.0" y1="788.8" x2="1328.0" y2="795" stroke="#9a9a9a" stroke-width="1.2"/>
<line x1="1424.0" y1="408.8" x2="1424.0" y2="788.8" stroke="#d6d6d6" stroke-width="1.3" stroke-dasharray="4 4"/>
<line x1="1424.0" y1="788.8" x2="1424.0" y2="795" stroke="#9a9a9a" stroke-width="1.2"/>
<line x1="1520.0" y1="408.8" x2="1520.0" y2="788.8" stroke="#d6d6d6" stroke-width="1.3" stroke-dasharray="4 4"/>
<line x1="1520.0" y1="788.8" x2="1520.0" y2="795" stroke="#9a9a9a" stroke-width="1.2"/>
<line x1="1616.0" y1="408.8" x2="1616.0" y2="788.8" stroke="#d6d6d6" stroke-width="1.3" stroke-dasharray="4 4"/>
<line x1="1616.0" y1="788.8" x2="1616.0" y2="795" stroke="#9a9a9a" stroke-width="1.2"/>
<line x1="1712.0" y1="408.8" x2="1712.0" y2="788.8" stroke="#d6d6d6" stroke-width="1.3" stroke-dasharray="4 4"/>
<line x1="1712.0" y1="788.8" x2="1712.0" y2="795" stroke="#9a9a9a" stroke-width="1.2"/>
<path d="M660.2,734.5 L661.3,732.6 L662.4,730.7 L663.4,728.7 L664.4,726.8 L665.3,724.8 L666.2,722.9 L667.1,720.9 L667.9,718.9 L668.6,716.9 L669.4,714.8 L670.1,712.8 L670.7,710.7 L671.4,708.7 L672.0,706.6 L672.6,704.6 L673.1,702.5 L673.7,700.4 L674.2,698.3 L674.7,696.2 L675.2,694.1 L675.6,692.0 L676.1,689.9 L676.5,687.8 L677.0,685.7 L677.4,683.5 L677.9,681.4 L678.3,679.3 L678.7,677.2 L679.2,675.1 L679.6,672.9 L680.1,670.8 L680.6,668.7 L681.0,666.6 L681.5,664.5 L682.0,662.4 L682.5,660.2 L683.0,658.1 L683.4,656.0 L683.9,653.9 L684.4,651.8 L684.9,649.7 L685.4,647.6 L686.0,645.5 L686.5,643.4 L687.0,641.2 L687.5,639.1 L688.0,637.0 L688.5,634.9 L689.0,632.8 L689.6,630.7 L690.1,628.6 L690.6,626.5 L691.1,624.4 L691.6,622.3 L692.1,620.2 L692.7,618.1 L693.2,616.0 L693.7,613.9 L694.2,611.8 L694.7,609.7 L695.2,607.6 L695.7,605.4 L696.2,603.3 L696.7,601.2 L697.2,599.1 L697.7,597.0 L698.2,594.9 L698.7,592.8 L699.1,590.7 L699.6,588.6 L700.1,586.5 L700.6,584.4 L701.0,582.3 L701.5,580.2 L702.0,578.0 L702.4,575.9 L702.9,573.8 L703.4,571.7 L703.8,569.6 L704.3,567.5 L704.8,565.4 L705.2,563.3 L705.7,561.2 L706.2,559.1 L706.7,557.0 L707.2,554.9 L707.6,552.8 L708.1,550.7 L708.6,548.6 L709.1,546.5 L709.6,544.4 L710.1,542.3 L710.6,540.2 L711.2,538.1 L711.7,536.0 L712.2,533.9 L712.8,531.9 L713.3,529.8 L713.9,527.7 L714.4,525.6 L715.0,523.5 L715.6,521.4 L716.1,519.4 L716.7,517.3 L717.4,515.2 L718.0,513.2 L718.6,511.1 L719.2,509.0 L719.9,507.0 L720.5,504.9 L721.2,502.8 L721.9,500.8 L722.6,498.7 L723.3,496.7 L724.0,494.6 L724.8,492.6 L725.5,490.6 L726.3,488.5 L727.1,486.5 L727.9,484.4 L728.7,482.4 L729.5,480.4 L730.4,478.4 L731.2,476.3 L732.1,474.3 L733.0,472.3 L733.9,470.3 L734.8,468.3 L735.8,466.3 L736.7,464.3 L737.7,462.3 L738.7,460.3 L739.8,458.3 L740.8,456.4 L741.9,454.4 L743.1,452.6 L744.3,450.9 L745.6,449.3 L747.0,447.9 L748.5,446.7 L750.2,445.7 L752.0,445.0 L754.0,444.7 L756.2,444.7 L758.5,445.0 L760.7,445.6 L762.8,446.5 L764.6,447.8 L766.2,449.3 L767.6,451.0 L768.8,452.9 L769.9,454.9 L770.8,456.9 L771.7,459.0 L772.6,461.1 L773.5,463.2 L774.3,465.2 L775.1,467.3 L775.8,469.3 L776.6,471.3 L777.3,473.3 L778.0,475.3 L778.7,477.3 L779.4,479.4 L780.0,481.4 L780.7,483.4 L781.3,485.4 L782.0,487.4 L782.6,489.5 L783.2,491.5 L783.9,493.6 L784.5,495.7 L785.1,497.7 L785.7,499.8 L786.3,501.9 L786.9,504.0 L787.5,506.1 L788.1,508.2 L788.7,510.3 L789.3,512.4 L789.9,514.5 L790.5,516.5 L791.1,518.6 L791.7,520.7 L792.3,522.8 L792.9,524.9 L793.5,527.0 L794.1,529.1 L794.7,531.1 L795.4,533.2 L796.0,535.3 L796.6,537.4 L797.2,539.4 L797.8,541.5 L798.5,543.6 L799.1,545.6 L799.7,547.7 L800.3,549.8 L800.9,551.9 L801.5,553.9 L802.1,556.0 L802.7,558.1 L803.3,560.2 L803.9,562.2 L804.5,564.3 L805.1,566.4 L805.7,568.5 L806.3,570.6 L806.8,572.6 L807.4,574.7 L808.0,576.8 L808.6,578.9 L809.1,581.0 L809.7,583.1 L810.3,585.2 L810.8,587.3 L811.4,589.3 L812.0,591.4 L812.5,593.5 L813.1,595.6 L813.7,597.7 L814.3,599.8 L814.8,601.9 L815.4,604.0 L816.0,606.0 L816.6,608.1 L817.2,610.2 L817.8,612.3 L818.4,614.3 L819.1,616.4 L819.7,618.5 L820.3,620.6 L821.0,622.6 L821.6,624.7 L822.3,626.7 L822.9,628.8 L823.6,630.8 L824.3,632.9 L825.0,634.9 L825.7,637.0 L826.4,639.0 L827.2,641.0 L827.9,643.1 L828.7,645.1 L829.4,647.1 L830.2,649.1 L831.0,651.1 L831.8,653.1 L832.7,655.1 L833.5,657.1 L834.4,659.1 L835.3,661.1 L836.3,663.0 L837.3,664.9 L838.4,666.8 L839.5,668.7 L840.7,670.6 L841.9,672.4 L843.2,674.2 L844.6,675.9 L846.2,677.5 L847.8,678.8 L849.7,679.7 L851.7,680.1 L853.8,680.1 L855.9,679.8 L858.0,679.2 L860.0,678.4 L861.8,677.4 L863.6,676.2 L865.2,674.9 L866.8,673.5 L868.2,671.9 L869.6,670.2 L870.9,668.5 L872.1,666.7 L873.3,664.8 L874.4,662.9 L875.5,660.9 L876.6,659.0 L877.7,657.1 L878.8,655.1 L879.9,653.2 L880.9,651.3 L882.0,649.4 L883.0,647.5 L884.1,645.6 L885.1,643.6 L886.1,641.7 L887.1,639.8 L888.1,637.9 L889.1,636.0 L890.1,634.1 L891.1,632.2 L892.0,630.3 L893.0,628.4 L893.9,626.5 L894.9,624.6 L895.8,622.6 L896.8,620.7 L897.7,618.8 L898.6,616.8 L899.5,614.9 L900.4,612.9 L901.4,611.0 L902.3,609.0 L903.2,607.1 L904.2,605.2 L905.2,603.2 L906.2,601.3 L907.2,599.4 L908.3,597.6 L909.5,595.7 L910.7,593.9 L911.9,592.1 L913.2,590.4 L914.6,588.7 L916.1,587.0 L917.6,585.3 L919.2,583.8 L920.9,582.3 L922.7,580.9 L924.5,579.6 L926.4,578.5 L928.3,577.5 L930.3,576.8 L932.3,576.2 L934.3,576.0 L936.4,576.0 L938.4,576.3 L940.5,576.9 L942.5,577.7 L944.5,578.7 L946.4,579.8 L948.1,581.2 L949.8,582.7 L951.3,584.3 L952.6,586.0 L953.8,587.8 L954.9,589.6 L955.9,591.5 L956.9,593.4 L957.8,595.3 L958.8,597.2 L959.9,599.1 L961.0,600.9 L962.2,602.7 L963.5,604.5 L964.8,606.2 L966.2,607.9 L967.6,609.5 L969.0,611.1 L970.6,612.7 L972.1,614.2 L973.8,615.7 L975.4,617.2 L977.1,618.6 L978.9,619.9 L980.6,621.2 L982.4,622.4 L984.3,623.6 L986.2,624.8 L988.1,625.8 L990.0,626.9 L992.0,627.8 L994.0,628.7 L996.0,629.6 L998.0,630.3 L1000.0,631.0 L1002.1,631.7 L1004.1,632.3 L1006.2,632.8 L1008.3,633.2 L1010.4,633.6 L1012.5,634.0 L1014.6,634.3 L1016.7,634.6 L1018.9,634.8 L1021.0,635.0 L1023.2,635.2 L1025.3,635.3 L1027.5,635.5 L1029.6,635.6 L1031.8,635.8 L1034.0,635.9 L1036.1,636.0 L1038.3,636.2 L1040.4,636.3 L1042.6,636.5 L1044.8,636.7 L1046.9,636.9 L1049.1,637.1 L1051.3,637.4 L1053.4,637.8 L1055.6,638.1 L1057.7,638.5 L1059.8,639.0 L1062.0,639.5 L1064.1,640.0 L1066.2,640.6 L1068.3,641.2 L1070.3,641.8 L1072.4,642.5 L1074.5,643.2 L1076.5,643.9 L1078.5,644.7 L1080.5,645.6 L1082.5,646.5 L1084.4,647.4 L1086.4,648.3 L1088.3,649.3 L1090.2,650.3 L1092.1,651.4 L1093.9,652.5 L1095.7,653.7 L1097.5,654.8 L1099.3,656.1 L1101.0,657.3 L1102.7,658.6 L1104.4,659.9 L1106.0,661.3 L1107.6,662.7 L1109.2,664.2 L1110.7,665.7 L1112.2,667.2 L1113.7,668.8 L1115.1,670.4 L1116.5,672.0 L1117.8,673.7 L1119.1,675.4 L1120.4,677.1 L1121.7,678.9 L1122.9,680.6 L1124.1,682.4 L1125.3,684.3 L1126.5,686.1 L1127.6,688.0 L1128.8,689.9 L1129.9,691.7 L1131.0,693.6 L1132.1,695.6 L1133.2,697.5 L1134.2,699.4 L1135.3,701.3 L1136.3,703.3 L1137.4,705.2 L1138.5,707.1 L1139.5,709.0 L1140.6,711.0 L1141.6,712.9 L1142.7,714.8 L1143.8,716.7 L1144.9,718.5 L1146.0,720.4 L1147.1,722.2 L1148.2,724.1 L1149.4,725.9 L1150.6,727.6 L1151.8,729.4 L1153.0,731.1 L1154.3,732.8 L1155.6,734.5 L1157.0,736.1 L1158.4,737.7 L1159.9,739.3 L1161.4,740.9 L1163.0,742.4 L1164.6,743.8 L1166.3,745.2 L1168.1,746.6 L1169.9,747.8 L1171.8,748.9 L1173.7,749.7 L1175.8,750.2 L1177.9,750.4 L1180.0,750.3 L1182.2,749.8 L1184.4,749.0 L1186.4,748.0 L1188.3,746.8 L1190.1,745.5 L1191.7,744.0 L1193.2,742.4 L1194.6,740.7 L1195.9,739.0 L1197.2,737.2 L1198.4,735.4 L1199.6,733.6 L1200.8,731.8 L1201.9,730.0 L1203.0,728.2 L1204.2,726.4 L1205.2,724.5 L1206.3,722.7 L1207.4,720.8 L1208.4,718.9 L1209.4,717.0 L1210.4,715.0 L1211.4,713.0 L1212.3,711.1 L1213.3,709.1 L1214.2,707.1 L1215.1,705.1 L1216.0,703.1 L1217.0,701.1 L1217.9,699.1 L1218.8,697.1 L1219.7,695.2 L1220.7,693.2 L1221.6,691.3 L1222.6,689.4 L1223.6,687.5 L1224.6,685.7 L1225.6,683.8 L1226.6,682.0 L1227.7,680.2 L1228.8,678.4 L1229.9,676.6 L1231.0,674.8 L1232.2,673.1 L1233.4,671.3 L1234.7,669.6 L1236.0,667.8 L1237.3,666.1 L1238.7,664.4 L1240.1,662.7 L1241.6,661.0 L1243.1,659.3 L1244.7,657.7 L1246.3,656.1 L1248.0,654.6 L1249.7,653.1 L1251.5,651.8 L1253.3,650.5 L1255.1,649.4 L1257.0,648.4 L1259.0,647.5 L1260.9,646.8 L1263.0,646.2 L1265.0,645.7 L1267.1,645.4 L1269.2,645.2 L1271.3,645.1 L1273.4,645.1 L1275.5,645.2 L1277.6,645.4 L1279.7,645.7 L1281.9,646.1 L1284.0,646.6 L1286.0,647.2 L1288.1,647.9 L1290.1,648.6 L1292.2,649.4 L1294.1,650.3 L1296.1,651.3 L1298.0,652.3 L1299.9,653.4 L1301.8,654.5 L1303.6,655.7 L1305.4,656.9 L1307.2,658.2 L1309.0,659.5 L1310.7,660.8 L1312.4,662.2 L1314.1,663.6 L1315.8,665.0 L1317.4,666.4 L1319.0,667.9 L1320.6,669.4 L1322.2,670.9 L1323.8,672.3 L1325.3,673.8 L1326.8,675.3 L1328.3,676.8 L1329.9,678.2 L1331.4,679.7 L1332.9,681.2 L1334.5,682.6 L1336.0,684.0 L1337.6,685.4 L1339.2,686.8 L1340.9,688.2 L1342.6,689.6 L1344.4,690.9 L1346.2,692.2 L1348.1,693.5 L1350.0,694.8 L1352.0,696.0 L1354.0,697.0 L1356.1,697.9 L1358.1,698.6 L1360.2,699.1 L1362.2,699.2 L1364.2,698.9 L1366.1,698.4 L1367.9,697.4 L1369.6,696.2 L1371.3,694.8 L1372.8,693.2 L1374.1,691.5 L1375.4,689.6 L1376.4,687.7 L1377.3,685.7 L1378.1,683.7 L1378.7,681.7 L1379.3,679.6 L1379.7,677.5 L1380.1,675.3 L1380.4,673.1 L1380.7,671.0 L1380.9,668.8 L1381.1,666.6 L1381.3,664.4 L1381.6,662.2 L1381.8,660.0 L1382.1,657.9 L1382.3,655.7 L1382.6,653.6 L1382.8,651.4 L1383.1,649.3 L1383.3,647.1 L1383.5,645.0 L1383.7,642.9 L1383.9,640.7 L1384.0,638.6 L1384.2,636.4 L1384.3,634.3 L1384.4,632.1 L1384.5,629.9 L1384.6,627.8 L1384.7,625.6 L1384.8,623.5 L1384.9,621.3 L1385.0,619.2 L1385.0,617.0 L1385.1,614.9 L1385.2,612.7 L1385.3,610.5 L1385.4,608.4 L1385.6,606.2 L1385.7,604.1 L1385.8,601.9 L1386.0,599.8 L1386.2,597.6 L1386.4,595.5 L1386.6,593.3 L1386.9,591.2 L1387.2,589.1 L1387.5,586.9 L1387.8,584.8 L1388.2,582.6 L1388.6,580.5 L1389.0,578.4 L1389.5,576.3 L1390.1,574.1 L1390.6,572.0 L1391.2,569.9 L1391.9,567.8 L1392.6,565.7 L1393.4,563.6 L1394.2,561.5 L1395.0,559.5 L1396.0,557.5 L1397.0,555.5 L1398.1,553.7 L1399.3,551.9 L1400.5,550.1 L1401.8,548.5 L1403.3,547.0 L1404.8,545.5 L1406.4,544.2 L1408.1,543.0 L1409.9,542.0 L1411.9,541.1 L1413.9,540.3 L1415.9,539.6 L1418.1,539.1 L1420.2,538.8 L1422.4,538.5 L1424.6,538.4 L1426.8,538.5 L1429.0,538.6 L1431.2,538.9 L1433.4,539.3 L1435.6,539.8 L1437.7,540.5 L1439.8,541.2 L1441.9,542.0 L1443.9,542.9 L1445.8,543.9 L1447.7,545.1 L1449.6,546.2 L1451.3,547.5 L1453.0,548.8 L1454.7,550.3 L1456.2,551.7 L1457.7,553.3 L1459.2,554.9 L1460.6,556.5 L1461.9,558.2 L1463.2,560.0 L1464.4,561.7 L1465.6,563.6 L1466.7,565.4 L1467.7,567.3 L1468.7,569.2 L1469.7,571.1 L1470.6,573.0 L1471.4,574.9 L1472.3,576.9 L1473.0,578.9 L1473.8,580.9 L1474.4,582.9 L1475.1,584.9 L1475.7,586.9 L1476.3,589.0 L1476.9,591.1 L1477.4,593.1 L1477.9,595.2 L1478.4,597.3 L1478.9,599.4 L1479.4,601.5 L1479.8,603.6 L1480.2,605.8 L1480.7,607.9 L1481.1,610.0 L1481.5,612.2 L1481.9,614.3 L1482.3,616.5 L1482.7,618.7 L1483.1,620.8 L1483.5,623.0 L1484.0,625.1 L1484.4,627.3 L1484.8,629.5 L1485.3,631.6 L1485.8,633.8 L1486.3,636.0 L1486.8,638.1 L1487.4,640.3 L1487.9,642.4 L1488.6,644.5 L1489.2,646.7 L1489.9,648.7 L1490.6,650.8 L1491.4,652.8 L1492.3,654.9 L1493.2,656.8 L1494.1,658.7 L1495.2,660.6 L1496.3,662.4 L1497.5,664.2 L1498.7,665.9 L1500.1,667.6 L1501.5,669.1 L1503.0,670.6 L1504.6,672.1 L1506.3,673.4 L1508.1,674.6 L1509.9,675.7 L1511.8,676.6 L1513.7,677.4 L1515.7,678.0 L1517.7,678.4 L1519.7,678.6 L1521.8,678.6 L1523.8,678.3 L1525.9,677.9 L1527.9,677.2 L1530.0,676.4 L1532.0,675.5 L1534.0,674.4 L1536.0,673.2 L1537.9,672.0 L1539.8,670.6 L1541.7,669.2 L1543.5,667.7 L1545.2,666.2 L1546.9,664.7 L1548.5,663.2 L1550.1,661.6 L1551.6,660.1 L1553.1,658.5 L1554.5,656.9 L1555.9,655.3 L1557.3,653.7 L1558.6,652.1 L1559.9,650.4 L1561.2,648.8 L1562.5,647.1 L1563.7,645.4 L1565.0,643.6 L1566.2,641.9 L1567.4,640.1 L1568.5,638.4 L1569.7,636.6 L1570.8,634.8 L1572.0,633.0 L1573.1,631.1 L1574.2,629.3 L1575.2,627.4 L1576.3,625.6 L1577.4,623.7 L1578.4,621.8 L1579.4,619.9 L1580.4,618.0 L1581.4,616.1 L1582.4,614.1 L1583.4,612.2 L1584.3,610.2 L1585.3,608.3 L1586.2,606.3 L1587.2,604.4 L1588.1,602.4 L1589.0,600.4 L1589.9,598.4 L1590.8,596.4 L1591.7,594.4 L1592.6,592.4 L1593.5,590.4 L1594.3,588.4 L1595.2,586.4 L1596.1,584.4 L1596.9,582.4 L1597.8,580.4 L1598.7,578.4 L1599.5,576.4 L1600.4,574.4 L1601.2,572.4 L1602.1,570.4 L1602.9,568.4 L1603.8,566.4 L1604.6,564.4 L1605.5,562.4 L1606.3,560.4 L1607.2,558.4 L1608.0,556.5 L1608.9,554.5 L1609.8,552.5 L1610.6,550.6 L1611.5,548.6 L1612.4,546.7 L1613.3,544.8 L1614.3,542.9 L1615.2,541.0 L1616.2,539.1 L1617.2,537.2 L1618.3,535.3 L1619.4,533.5 L1620.5,531.6 L1621.7,529.8 L1622.9,528.0 L1624.2,526.2 L1625.5,524.5 L1626.9,522.7 L1628.3,521.0 L1629.8,519.4 L1631.4,517.8 L1633.0,516.3 L1634.7,514.9 L1636.5,513.7 L1638.3,512.6 L1640.1,511.6 L1642.1,510.8 L1644.0,510.0 L1646.1,509.5 L1648.1,509.0 L1650.2,508.6 L1652.3,508.4 L1654.5,508.3 L1656.7,508.2 L1658.8,508.3 L1661.0,508.4 L1663.2,508.6 L1665.4,509.0 L1667.6,509.3 L1669.8,509.8 L1672.0,510.3 L1674.1,510.9 L1676.3,511.5 L1678.4,512.2 L1680.4,513.0 L1682.5,513.7 L1684.5,514.5 L1686.4,515.4 L1688.4,516.3 L1690.3,517.2 L1692.2,518.1 L1694.1,519.0 L1696.0,519.9 L1697.8,520.9 L1699.7,521.8 L1701.7,522.8 L1703.6,523.7 L1705.5,524.6 L1707.5,525.5 L1709.6,526.3 L1711.6,527.2 L1713.7,528.0" fill="none" stroke="#4a6fcf" stroke-width="3"/>
</svg>
<div class="t" style="left:543px;width:101px;text-align:right;top:780.6px;font-size:14.2px;color:#666">0%</div>
<div class="t" style="left:543px;width:101px;text-align:right;top:742.6px;font-size:14.2px;color:#666">10%</div>
<div class="t" style="left:543px;width:101px;text-align:right;top:704.6px;font-size:14.2px;color:#666">20%</div>
<div class="t" style="left:543px;width:101px;text-align:right;top:666.6px;font-size:14.2px;color:#666">30%</div>
<div class="t" style="left:543px;width:101px;text-align:right;top:628.6px;font-size:14.2px;color:#666">40%</div>
<div class="t" style="left:543px;width:101px;text-align:right;top:590.6px;font-size:14.2px;color:#666">50%</div>
<div class="t" style="left:543px;width:101px;text-align:right;top:552.6px;font-size:14.2px;color:#666">60%</div>
<div class="t" style="left:543px;width:101px;text-align:right;top:514.6px;font-size:14.2px;color:#666">70%</div>
<div class="t" style="left:543px;width:101px;text-align:right;top:476.6px;font-size:14.2px;color:#666">80%</div>
<div class="t" style="left:543px;width:101px;text-align:right;top:438.6px;font-size:14.2px;color:#666">90%</div>
<div class="t" style="left:543px;width:101px;text-align:right;top:400.6px;font-size:14.2px;color:#666">100%</div>
<div class="t" style="left:655px;top:796.5px;font-size:15px;color:#666;line-height:18px">Jun<br>2023</div>
<div class="t" style="left:751px;top:796.5px;font-size:15px;color:#666;line-height:18px">Jul<br>2023</div>
<div class="t" style="left:847px;top:796.5px;font-size:15px;color:#666;line-height:18px">Aug<br>2023</div>
<div class="t" style="left:943px;top:796.5px;font-size:15px;color:#666;line-height:18px">Sep<br>2023</div>
<div class="t" style="left:1039px;top:796.5px;font-size:15px;color:#666;line-height:18px">Oct<br>2023</div>
<div class="t" style="left:1135px;top:796.5px;font-size:15px;color:#666;line-height:18px">Nov<br>2023</div>
<div class="t" style="left:1231px;top:796.5px;font-size:15px;color:#666;line-height:18px">Dec<br>2023</div>
<div class="t" style="left:1327px;top:796.5px;font-size:15px;color:#666;line-height:18px">Jan<br>2024</div>
<div class="t" style="left:1423px;top:796.5px;font-size:15px;color:#666;line-height:18px">Feb<br>2024</div>
<div class="t" style="left:1519px;top:796.5px;font-size:15px;color:#666;line-height:18px">Mar<br>2024</div>
<div class="t" style="left:1615px;top:796.5px;font-size:15px;color:#666;line-height:18px">Apr<br>2024</div>
<div class="t" style="left:1711px;top:796.5px;font-size:15px;color:#666;line-height:18px">May<br>2024</div>
<div class="t" style="left:1119px;top:858.5px;font-size:15px;color:#111">Month</div>
<div class="t" style="left:572.5px;top:592px;width:40px;text-align:center;font-size:15px;color:#111;transform:rotate(-90deg)">Score</div>
<div class="t" style="left:516px;width:100px;text-align:right;top:390.6px;font-size:14.2px;color:rgba(0,0,0,0.03)">101%</div>
<div class="t" style="left:516px;width:100px;text-align:right;top:431.6px;font-size:14.2px;color:rgba(0,0,0,0.03)">100.8%</div>
<div class="t" style="left:516px;width:100px;text-align:right;top:472.6px;font-size:14.2px;color:rgba(0,0,0,0.03)">100.6%</div>
<div class="t" style="left:516px;width:100px;text-align:right;top:513.6px;font-size:14.2px;color:rgba(0,0,0,0.03)">100.4%</div>
<div class="t" style="left:516px;width:100px;text-align:right;top:554.6px;font-size:14.2px;color:rgba(0,0,0,0.03)">100.2%</div>
<div class="t" style="left:516px;width:100px;text-align:right;top:595.6px;font-size:14.2px;color:rgba(0,0,0,0.03)">100%</div>
<div class="t" style="left:516px;width:100px;text-align:right;top:636.6px;font-size:14.2px;color:rgba(0,0,0,0.03)">99.8%</div>
<div class="t" style="left:516px;width:100px;text-align:right;top:677.6px;font-size:14.2px;color:rgba(0,0,0,0.03)">99.6%</div>
<div class="t" style="left:516px;width:100px;text-align:right;top:718.6px;font-size:14.2px;color:rgba(0,0,0,0.03)">99.4%</div>
<div class="t" style="left:516px;width:100px;text-align:right;top:759.6px;font-size:14.2px;color:rgba(0,0,0,0.03)">99.2%</div>
<div class="t" style="left:516px;width:100px;text-align:right;top:800.6px;font-size:14.2px;color:rgba(0,0,0,0.03)">99%</div>
<div class="abs" style="left:626.5px;top:398px;width:1px;height:411px;background:rgba(0,0,0,0.018)"></div>
<div class="abs" style="left:627px;top:601.5px;width:1125px;height:1.5px;background:rgba(0,0,0,0.018)"></div>
<div class="t" style="left:628px;top:814.5px;font-size:15px;line-height:18px;color:rgba(0,0,0,0.03)">Aug<br>2024</div>
<div class="t" style="left:1752px;top:816.5px;font-size:15px;line-height:18px;color:rgba(0,0,0,0.03)">Aug<br>2024</div>
<div class="t" style="left:1168px;top:858.5px;font-size:15px;color:rgba(0,0,0,0.03)">Month</div>
<div class="t" style="left:535px;top:592px;width:40px;text-align:center;font-size:15px;color:rgba(0,0,0,0.03);transform:rotate(-90deg)">Score</div>
<div class="abs" style="left:291px;top:538.0px;width:17.5px;height:17.5px;border-radius:2.5px;background:#0f6b80"></div>
<svg class="abs" style="left:291px;top:538.0px" width="18" height="18" viewBox="0 0 18 18"><path d="M3.4,8.2 L8.2,13 L15.6,3.2" stroke="#fff" stroke-width="2.2" fill="none"/></svg>
<div class="abs" style="left:321px;top:540.5px;width:12px;height:12px;border-radius:50%;background:#4a6fd1"></div>
<div class="t" style="left:341px;top:539.3px;font-size:14.7px;color:#333">Overall</div>
<div class="abs" style="left:461px;top:536.0px;width:50px;height:21px;border-radius:11px;background:#a9bbea"></div>
<div class="t" style="left:461px;width:50px;text-align:center;top:539.7px;font-size:14px;color:#333">89%</div>
<div class="abs" style="left:291px;top:573.0px;width:17.5px;height:17.5px;border-radius:2.5px;border:1.6px solid #777;background:#fff"></div>
<div class="abs" style="left:321px;top:575.5px;width:12px;height:12px;border-radius:50%;background:#9189dc"></div>
<div class="t" style="left:341px;top:574.3px;font-size:14.7px;color:#333">PowerPoint</div>
<div class="abs" style="left:461px;top:571.0px;width:50px;height:21px;border-radius:11px;background:#cdc9f0"></div>
<div class="t" style="left:461px;width:50px;text-align:center;top:574.7px;font-size:14px;color:#333">22%</div>
<div class="abs" style="left:291px;top:608.0px;width:17.5px;height:17.5px;border-radius:2.5px;border:1.6px solid #777;background:#fff"></div>
<div class="abs" style="left:321px;top:610.5px;width:12px;height:12px;border-radius:50%;background:#e08a73"></div>
<div class="t" style="left:341px;top:609.3px;font-size:14.7px;color:#333">Word</div>
<div class="abs" style="left:461px;top:606.0px;width:50px;height:21px;border-radius:11px;background:#f3c7bb"></div>
<div class="t" style="left:461px;width:50px;text-align:center;top:609.7px;font-size:14px;color:#333">26%</div>
<div class="abs" style="left:291px;top:643.0px;width:17.5px;height:17.5px;border-radius:2.5px;border:1.6px solid #777;background:#fff"></div>
<div class="abs" style="left:321px;top:645.5px;width:12px;height:12px;border-radius:50%;background:#ebbd6e"></div>
<div class="t" style="left:341px;top:644.3px;font-size:14.7px;color:#333">PDF</div>
<div class="abs" style="left:461px;top:641.0px;width:50px;height:21px;border-radius:11px;background:#f6e0bb"></div>
<div class="t" style="left:461px;width:50px;text-align:center;top:644.7px;font-size:14px;color:#333">24%</div>
<div class="abs" style="left:291px;top:678.0px;width:17.5px;height:17.5px;border-radius:2.5px;border:1.6px solid #777;background:#fff"></div>
<div class="abs" style="left:321px;top:680.5px;width:12px;height:12px;border-radius:50%;background:#7acdc4"></div>
<div class="t" style="left:341px;top:679.3px;font-size:14.7px;color:#333">Text</div>
<div class="abs" style="left:461px;top:676.0px;width:50px;height:21px;border-radius:11px;background:#c2e9e5"></div>
<div class="t" style="left:461px;width:50px;text-align:center;top:679.7px;font-size:14px;color:#333">8%</div>
<div class="abs" style="left:291px;top:713.0px;width:17.5px;height:17.5px;border-radius:2.5px;border:1.6px solid #777;background:#fff"></div>
<div class="abs" style="left:321px;top:715.5px;width:12px;height:12px;border-radius:50%;background:#e06c6c"></div>
<div class="t" style="left:341px;top:714.3px;font-size:14.7px;color:#333">Excel</div>
<div class="abs" style="left:461px;top:711.0px;width:50px;height:21px;border-radius:11px;background:#f2bcbc"></div>
<div class="t" style="left:461px;width:50px;text-align:center;top:714.7px;font-size:14px;color:#333">20%</div>
<!-- CARD 5 -->
<div class="card" style="left:269px;top:912px;width:1600px;height:494px"></div>
<svg class="abs" style="left:284px;top:920px" width="32" height="32" viewBox="0 0 32 32"><path d="M9.4,8.4 V25.5 M9.4,10.3 H20.6 A0.8,0.8 0 0 1 21.4,11.1 V14.7 M9.4,14.7 H24.9 A0.8,0.8 0 0 1 25.7,15.5 V18.5 A0.8,0.8 0 0 1 24.9,19.3 H9.4 M18.5,19.3 V22.9 A0.8,0.8 0 0 1 17.7,23.7 H9.4" stroke="#3e1f6e" stroke-width="1.3" fill="none"/></svg>
<div class="t" style="left:323.5px;top:928px;font-size:17px;font-weight:bold;color:#111">Documents Analytics</div>
<div class="abs" style="left:269px;top:961.5px;width:1600px;height:1.5px;background:#ececec"></div>
<div class="t" style="left:289.5px;top:986.5px;font-size:16px;color:#6b6b6b">View an overview of your organization's documents.</div>
<div class="abs" style="left:289px;top:1026px;width:1560px;height:70px;background:#fff;border-radius:10px;box-shadow:0 0 3px rgba(0,0,0,.17),0 1px 2px rgba(0,0,0,.05)"></div>
<div class="abs" style="left:429.5px;top:1041px;width:994px;height:39.5px;border:1.5px solid #666;border-radius:4px;background:#fff"></div>
<svg class="abs" style="left:444px;top:1051px" width="20" height="20" viewBox="0 0 20 20"><circle cx="8.6" cy="8.7" r="6.3" stroke="#222" stroke-width="1.6" fill="none"/><path d="M13.2,13.3 L17.2,17.3" stroke="#222" stroke-width="1.6" stroke-linecap="round"/></svg>
<div class="t" style="left:479.5px;top:1052.5px;font-size:15.6px;color:#555">Search by document URL</div>
<div class="abs" style="left:1434.5px;top:1044.5px;width:64px;height:33px;border:2px solid #2a1670;border-radius:4px;background:#fff"></div>
<div class="t" style="left:1443.5px;top:1054px;font-size:14.5px;color:#2a1670;-webkit-text-stroke:0.4px #2a1670">Search</div>
<div class="abs" style="left:289px;top:1116px;width:1560px;height:215px;border:1px solid #dedede;border-radius:6px 6px 0 0;overflow:hidden;background:#fff">
  <div class="abs" style="left:0;top:0;width:1560px;height:61px;background:#f5f5fa;border-bottom:1px solid #dedede"></div>
  <div class="abs" style="left:0;top:112px;width:1560px;height:1px;background:#e2e2e2"></div>
  <div class="abs" style="left:0;top:163px;width:1560px;height:1px;background:#e2e2e2"></div>
</div>
<div class="t" style="left:308.3px;top:1139.5px;font-size:13.5px;color:#222;-webkit-text-stroke:0.4px #222">Document URL</div>
<svg class="abs" style="left:415.0px;top:1137px" width="12" height="17" viewBox="0 0 12 17"><path d="M1.5,6 L6,1.5 L10.5,6" stroke="#111" stroke-width="1.4" fill="none"/><path d="M1.5,11 L6,15.5 L10.5,11" stroke="#999" stroke-width="1.4" fill="none"/></svg>
<div class="t" style="left:1087.0px;top:1139.5px;font-size:13.5px;color:#222;-webkit-text-stroke:0.4px #222">Score</div>
<svg class="abs" style="left:1137.0px;top:1137px" width="12" height="17" viewBox="0 0 12 17"><path d="M1.5,6 L6,1.5 L10.5,6" stroke="#999" stroke-width="1.4" fill="none"/><path d="M1.5,11 L6,15.5 L10.5,11" stroke="#999" stroke-width="1.4" fill="none"/></svg>
<div class="t" style="left:1247.0px;top:1139.5px;font-size:13.5px;color:#222;-webkit-text-stroke:0.4px #222">Last Scan</div>
<svg class="abs" style="left:1322.0px;top:1137px" width="12" height="17" viewBox="0 0 12 17"><path d="M1.5,6 L6,1.5 L10.5,6" stroke="#999" stroke-width="1.4" fill="none"/><path d="M1.5,11 L6,15.5 L10.5,11" stroke="#999" stroke-width="1.4" fill="none"/></svg>
<div class="t" style="left:1624.0px;top:1139.5px;font-size:13.5px;color:#222;-webkit-text-stroke:0.4px #222">Scan Status</div>
<svg class="abs" style="left:1712.0px;top:1137px" width="12" height="17" viewBox="0 0 12 17"><path d="M1.5,6 L6,1.5 L10.5,6" stroke="#999" stroke-width="1.4" fill="none"/><path d="M1.5,11 L6,15.5 L10.5,11" stroke="#999" stroke-width="1.4" fill="none"/></svg>
<div class="t" style="left:306.5px;top:1195.5px;font-size:15px;color:#474747">Educational-Partnerships-for-Success-1.pdf</div>
<div class="t" style="left:1085px;top:1195.7px;font-size:14.2px;color:#444">100%</div>
<div class="t" style="left:1245.5px;top:1195.9px;font-size:14.8px;color:#474747">Wed, Aug 28, 2024, 5:25:01 PM</div>
<div class="abs" style="left:1621px;top:1189.0px;width:125px;height:28px;border:1.5px solid #1f7a1f;border-radius:14px;background:#e7f3e7"></div>
<div class="abs" style="left:1632px;top:1198.0px;width:10.5px;height:10.5px;border-radius:50%;background:#157015"></div>
<div class="t" style="left:1651px;top:1195.4px;font-size:15px;color:#1f7a1f">Completed</div>
<div class="t" style="left:306.5px;top:1246.5px;font-size:15px;color:#474747">Industry-Leading-Ed-Tech-Tools.docx</div>
<div class="t" style="left:1085px;top:1246.7px;font-size:14.2px;color:#444">83%</div>
<div class="t" style="left:1245.5px;top:1246.9px;font-size:14.8px;color:#474747">Wed, Aug 28, 2024, 5:24:56 PM</div>
<div class="abs" style="left:1621px;top:1240.0px;width:125px;height:28px;border:1.5px solid #1f7a1f;border-radius:14px;background:#e7f3e7"></div>
<div class="abs" style="left:1632px;top:1249.0px;width:10.5px;height:10.5px;border-radius:50%;background:#157015"></div>
<div class="t" style="left:1651px;top:1246.4px;font-size:15px;color:#1f7a1f">Completed</div>
<div class="t" style="left:306.5px;top:1297.5px;font-size:15px;color:#474747">Web-and-App-Accessibility.pdf</div>
<div class="t" style="left:1085px;top:1297.7px;font-size:14.2px;color:#444">54%</div>
<div class="t" style="left:1245.5px;top:1297.9px;font-size:14.8px;color:#474747">Wed, Aug 28, 2024, 5:25:08 PM</div>
<div class="abs" style="left:1621px;top:1291.0px;width:125px;height:28px;border:1.5px solid #1f7a1f;border-radius:14px;background:#e7f3e7"></div>
<div class="abs" style="left:1632px;top:1300.0px;width:10.5px;height:10.5px;border-radius:50%;background:#157015"></div>
<div class="t" style="left:1651px;top:1297.4px;font-size:15px;color:#1f7a1f">Completed</div>
<div class="abs" style="left:948px;top:1352px;width:33.5px;height:33px;border-radius:7px;background:#b0cbd2;"></div>
<div class="abs" style="left:990px;top:1352px;width:33.5px;height:33px;border-radius:7px;background:#b0cbd2;"></div>
<div class="abs" style="left:1032px;top:1352px;width:33.5px;height:33px;border-radius:7px;background:#0f6b80;"></div>
<div class="abs" style="left:1074px;top:1352px;width:33.5px;height:33px;border-radius:7px;background:#fff;border:1px solid #ececec;"></div>
<div class="abs" style="left:1116px;top:1352px;width:33.5px;height:33px;border-radius:7px;background:#fff;border:1px solid #ececec;"></div>
<div class="abs" style="left:1158px;top:1352px;width:33.5px;height:33px;border-radius:7px;background:#fff;border:1px solid #ececec;"></div>
<svg class="abs" style="left:0;top:1340px" width="1920" height="60" viewBox="0 1340 1920 60"><path d="M964,1364 L959.5,1369.5 L964,1375 M969.5,1364 L965,1369.5 L969.5,1375" stroke="#5c6b70" stroke-width="2" fill="none"/><path d="M1010,1364.5 L1004.5,1370 L1010,1375.5" stroke="#5c6b70" stroke-width="1.8" fill="none"/><path d="M1130,1364.5 L1135.5,1370 L1130,1375.5" stroke="#111" stroke-width="2.4" fill="none"/><path d="M1169.5,1364 L1174,1369.5 L1169.5,1375 M1174.5,1364 L1179,1369.5 L1174.5,1375" stroke="#111" stroke-width="2.2" fill="none"/></svg>
<div class="t" style="left:1032px;width:33.5px;text-align:center;top:1361.5px;font-size:14.5px;font-weight:bold;color:#fff">1</div>
<div class="t" style="left:1074px;width:33.5px;text-align:center;top:1361px;font-size:15px;color:#333">2</div>
<div class="abs" style="left:1886px;top:816px;width:33px;height:90px;border:2px solid #0f6b80;border-radius:4px;background:#fff"></div>
<div class="t" style="left:1862.5px;top:853px;width:80px;text-align:center;font-size:14.5px;color:#0f6b80;-webkit-text-stroke:0.35px #0f6b80;transform:rotate(-90deg)">Feedback</div>
<div class="abs" style="left:1911px;top:908px;width:6px;height:510px;background:#e6e6e6"></div>
</body></html>
